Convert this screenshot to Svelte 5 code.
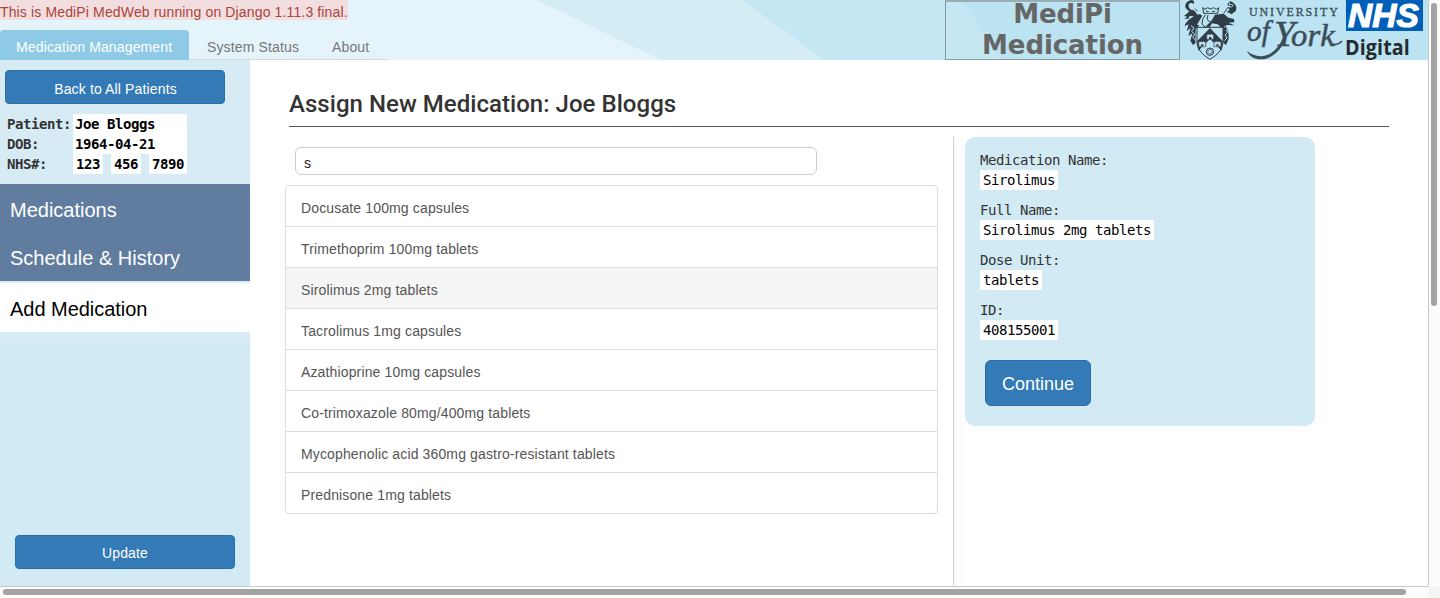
<script>
  const meds = [
    'Docusate 100mg capsules',
    'Trimethoprim 100mg tablets',
    'Sirolimus 2mg tablets',
    'Tacrolimus 1mg capsules',
    'Azathioprine 10mg capsules',
    'Co-trimoxazole 80mg/400mg tablets',
    'Mycophenolic acid 360mg gastro-resistant tablets',
    'Prednisone 1mg tablets'
  ];
  let selected = $state(2);
  let query = $state('s');
  const details = [
    ['Medication Name:', 'Sirolimus'],
    ['Full Name:', 'Sirolimus 2mg tablets'],
    ['Dose Unit:', 'tablets'],
    ['ID:', '408155001']
  ];
</script>

<div class="window">
  <div class="page">
    <header>
      <svg class="facets" viewBox="0 0 1428 60" aria-hidden="true">
        <path fill="#e5f4fa" d="M0 0H1428V60H0z" />
        <path fill="#d4edf5" d="M537 0H1428V60H661z" />
        <path fill="#c5e7f3" d="M742 0H1428V60H824z" />
        <path fill="#bbe3f1" d="M963 0H1428V60H1001z" />
      </svg>
      <div class="left">
        <div class="notice">This is MediPi MedWeb running on Django 1.11.3 final.</div>
        <nav>
          <span class="tab on">Medication Management</span>
          <span class="tab status">System Status</span>
          <span class="tab about">About</span>
        </nav>
      </div>
      <div class="brand">MediPi<br />Medication</div>
      <svg class="crest" viewBox="0 0 180 180" aria-hidden="true">
        <g fill="#303d49">
          <path d="M36 0C21 2 13 12 17 24L28 35 46 39 41 30C31 31 25 24 26 14 28 8 36 7 41 12 44 7 42 1 36 0z" />
          <path d="M12 48l15-13 18-1 8 12-10 3-14-1-4 8-12 1 9-7z" />
          <path d="M49 44C28 56 16 66 14 79l12-6-6 21 12-11-7 25 12-8-6 22 8 13 7-5 1-43 11-11-7-2 16-27-7-4z" />
          <path d="M105 44l26-3 14 12 17 4 1 10-18 1 18 8-22-1-10 6 10 10-16-6-12-12-17-3-7 12-10-5 15-14z" />
          <path d="M137 78l8 18 1 21-8 18-8-6-2-39z" />
          <path d="M150 4c13 3 22 14 18 27l-13 12-15-8 10-5-7-8 12 1 6-9-11-2z" />
        </g>
        <g fill="none" stroke="#303d49" stroke-width="3">
          <path d="M68 23l7 5 8-5 9 4 9-4 8 5 7-5-3 17H71z" />
          <path d="M78 34h8m10 0h9M76 44l-8 14-2 14 9 9 10-1M84 45l-3 12 9 10 12-9 4-13M100 55l18 17" />
          <path d="M149 5l-6 10 13 2-8 11 14-3-5 13 10-6M53 34l-8-8M131 40l13-18" />
        </g>
        <path d="M51 82h78v48q-4 28-39 48-35-20-39-48z" fill="#bbe3f1" stroke="#303d49" stroke-width="3" />
        <path d="M90 84l38 40-3 28-35-35-35 35-4-28z" fill="#303d49" />
        <g fill="#bbe3f1" stroke="#303d49" stroke-width="2">
          <path d="M80 101l4 3 3-3 4 3 3-3 4 3 3-3v17H80z" />
          <path d="M56 123l4 3 3-3 4 3 3-3 4 3 3-3v17H56z" />
          <path d="M102 123l4 3 3-3 4 3 3-3 4 3 3-3v17h-21z" />
        </g>
        <path d="M87 111h7v6h-7zM63 133h7v6h-7zM109 133h7v6h-7z" fill="#303d49" />
        <circle cx="90" cy="155" r="11" fill="#bbe3f1" stroke="#303d49" stroke-width="3" />
        <circle cx="90" cy="155" r="6.5" fill="none" stroke="#303d49" stroke-width="3" stroke-dasharray="5 2" />
        <path d="M33 77l9 7-7 10 9 8-6 10 8 7M138 89l5 8-8 8 6 9-8 8" fill="none" stroke="#bbe3f1" stroke-width="3" />
      </svg>
      <svg class="york" viewBox="0 0 105 60">
        <g fill="#3c4d58" font-family="'Liberation Serif', serif">
          <text x="9" y="16" font-size="12" stroke="#3c4d58" stroke-width=".3" textLength="89">UNIVERSITY</text>
          <g font-style="italic" stroke="#3c4d58" stroke-width=".5">
            <text x="7" y="41" font-size="29" textLength="23" lengthAdjust="spacingAndGlyphs">of</text>
            <text x="34" y="46" font-size="35" textLength="21" lengthAdjust="spacingAndGlyphs">Y</text>
            <text x="51" y="46" font-size="32" textLength="44" lengthAdjust="spacingAndGlyphs">ork</text>
          </g>
        </g>
        <path d="M46 38C42 48 36 55 27 58.500 18 61 10 58 7 51 13 56 20 57.500 27 55 35 52 39 46 43 38z" fill="#3c4d58" />
        <path d="M93 44q4 2 9-3" fill="none" stroke="#3c4d58" stroke-width="1.500" />
      </svg>
      <svg class="nhs" viewBox="0 0 83 60">
        <path fill="#005eb8" d="M1 0H78V31H1z" />
        <text x="3" y="27" fill="#fff" stroke="#fff" stroke-width="1.200" font-family="'Liberation Sans', sans-serif" font-size="33" font-weight="bold" font-style="italic" textLength="71" lengthAdjust="spacingAndGlyphs">NHS</text>
        <text x="0" y="55" fill="#252a2e" font-family="'Open Sans', sans-serif" font-size="21.500" font-weight="bold" textLength="65" lengthAdjust="spacingAndGlyphs">Digital</text>
      </svg>
    </header>

    <div class="body">
      <aside>
        <div class="top">
          <button class="btn back">Back to All Patients</button>
          <dl>
            <dt>Patient:</dt><dd><b>Joe Bloggs</b></dd>
            <dt>DOB:</dt><dd><b>1964-04-21</b></dd>
            <dt>NHS#:</dt><dd class="nums"><i>123</i><i>456</i><i>7890</i></dd>
          </dl>
          <div class="menu">
            <div>Medications</div>
            <div>Schedule &amp; History</div>
          </div>
          <div class="current">Add Medication</div>
        </div>
        <button class="btn update">Update</button>
      </aside>

      <main>
        <h1><span>Assign New Medication: Joe Bloggs</span></h1>
        <div class="cols">
          <section class="search">
            <input bind:value={query} aria-label="Search" />
            <ul>
              {#each meds as med, i}
                <li class:selected={i === selected}>{med}</li>
              {/each}
            </ul>
          </section>
          <section class="detail">
            <div class="card">
              {#each details as [label, value]}
                <div class="field"><div>{label}</div><span>{value}</span></div>
              {/each}
              <button class="btn continue">Continue</button>
            </div>
          </section>
        </div>
      </main>
    </div>
  </div>
  <div class="vbar"><div></div></div>
  <div class="hbar"><div></div></div>
  <div class="corner"></div>
</div>

<style>
  :global(body) { margin: 0; overflow: hidden; background: #fff; }
  * { box-sizing: border-box; }
  .window {
    display: grid; grid-template: 586px 12px / 1428px 12px;
    width: 1440px; height: 598px; overflow: hidden;
    font: 14px/20px 'Liberation Sans', Arial, sans-serif; color: #333;
    letter-spacing: .14px;
  }
  .page { overflow: hidden; }
  header { position: relative; display: flex; height: 60px; }
  .facets { position: absolute; inset: 0; width: 1428px; height: 60px; }
  .left, .brand, .crest, .york, .nhs { position: relative; flex: none; }
  .left { width: 945px; }
  .notice { width: 348px; height: 20px; padding-top: 2px; background: #f2dede; color: #a94442; white-space: nowrap; }
  nav { display: flex; width: 387px; height: 30px; margin-top: 10px; border-bottom: 1px solid #d5dade; }
  .tab { height: 29px; padding-top: 7px; color: #777; white-space: nowrap; }
  .tab.on { width: 189px; height: 30px; padding-left: 16px; border-radius: 4px 4px 0 0; background: #8ecae6; color: #fff; }
  .status { width: 143px; padding-left: 18px; }
  .brand {
    width: 235px; height: 60px; border: 1px solid #869ba4; border-top: 2px solid #9badb4; color: #666;
    font: bold 26px/31px 'DejaVu Sans', sans-serif; letter-spacing: -.08px; text-align: center;
  }
  .brand { line-height: 30.500px; text-indent: -1px; }
  .brand::before { content: ''; display: block; margin-top: -3px; }
  .crest { width: 60px; height: 60px; }
  .york { width: 105px; height: 60px; }
  .nhs { width: 83px; height: 60px; }

  .body { display: flex; height: 526px; }
  aside { display: flex; flex-direction: column; justify-content: space-between; flex: none; width: 250px; padding-bottom: 17px; background: #d1eaf4; }
  .top { height: 282px; padding-top: 10px; background: #d7ebf5; }
  .btn { display: block; height: 34px; padding: 3px 0 0; border: 1px solid #2e6da4; border-radius: 4px; background: #337ab7; color: #fff; font: inherit; letter-spacing: inherit; text-align: center; }
  .back { width: 220px; margin-left: 5px; padding-left: 1px; }
  .update { width: 220px; margin-left: 15px; padding-top: 1px; }
  dl {
    display: grid; grid-template-columns: 66px 114px; grid-auto-rows: 20px; margin: 10px 0 10px 7px;
    font: bold 14px/20px 'DejaVu Sans Mono', monospace; letter-spacing: -.43px; white-space: nowrap;
  }
  dd { margin: 0; padding-left: 2px; background: #fff; color: #000; }
  .nums { display: flex; gap: 8px; padding: 0; background: none; }
  i { padding: 0 3px; background: #fff; font-style: normal; width: 30px; }
  i:last-child { width: 38px; }
  .menu { height: 97px; padding: 2px 0 0 10px; background: #607d9f; color: #fff; font-size: 20px; line-height: 48px; letter-spacing: 0; }
  .current { height: 49px; margin-top: 2px; padding-left: 10px; background: #fff; color: #000; font-size: 20px; line-height: 52px; letter-spacing: -.03px; }

  main { width: 1178px; background: #fff; }
  h1 { width: 1100px; height: 35px; margin: 32px 0 10px 39px; border-bottom: 1px solid #555; color: #333; font: 500 24px/24px Roboto, sans-serif; letter-spacing: .04px; }
  .cols { display: flex; height: 449px; margin-left: 35px; }
  .search { width: 668px; padding-top: 10px; }
  input { display: block; width: 522px; height: 28px; margin: 0 0 10px 10px; padding: 3px 8px 0; border: 1px solid #ccc; border-radius: 6px; background: #fff; color: #222; font: inherit; outline: none; }
  ul { width: 653px; margin: 0; padding: 0; border: 1px solid #ddd; border-radius: 4px; list-style: none; overflow: hidden; }
  li { height: 41px; padding: 12px 15px 0; border-bottom: 1px solid #ddd; color: #555; }
  li:last-child { height: 40px; border: 0; }
  .selected { background: #f5f5f5; }
  .detail { width: 362px; border-left: 1px solid #ccc; padding-left: 11px; background: linear-gradient(90deg, #fcfcfc 11px, #fff 11px); }
  .card { width: 350px; height: 289px; padding: 13px 15px; border-radius: 10px; background: #d1eaf4; font: 14px/20px 'DejaVu Sans Mono', monospace; letter-spacing: -.43px; }
  .field { height: 50px; }
  .field span { display: inline-block; height: 20px; padding: 0 3px; background: #fff; color: #000; }
  .continue { width: 106px; height: 46px; margin: 10px 0 0 5px; padding-top: 1px; border-radius: 6px; font: 18px/24px 'Liberation Sans', sans-serif; letter-spacing: 0; }

  .vbar { border-left: 1px solid #c8c8c8; background: #fcfcfc; padding: 3px 0 0 2px; }
  .vbar div { width: 6px; height: 303px; border-radius: 3px; background: #a3a3a3; }
  .hbar { border-top: 1px solid #c8c8c8; background: #fcfcfc; padding: 2px 0 0 3px; }
  .hbar div { width: 1403px; height: 6px; border-radius: 3px; background: #a3a3a3; }
  .corner { background: #f5f5f5; }
</style>
